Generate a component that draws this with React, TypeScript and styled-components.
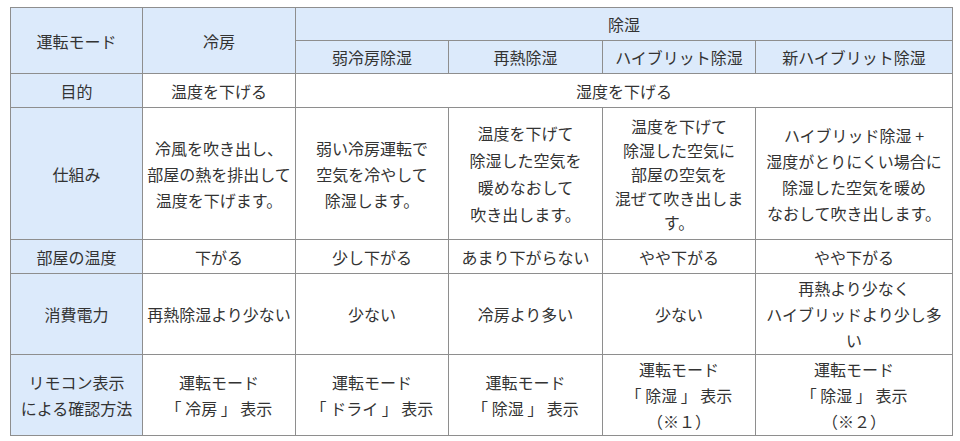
import styled, { createGlobalStyle } from "styled-components";

const GlobalStyle = createGlobalStyle`
  body {
    margin: 0;
    background: #fff;
    font-family: "Noto Sans CJK JP", "Noto Sans", sans-serif;
    color: #333;
  }
`;

const Page = styled.div`
  padding: 7px 0 0 10px;
`;

const Table = styled.table`
  width: 942px;
  table-layout: fixed;
  border-collapse: collapse;
  font-size: 16px;
  line-height: 26px;
`;

const Row = styled.tr<{ $h: number }>`
  height: ${(p) => p.$h}px;
`;

const HeadCell = styled.th`
  background: #dceafb;
  border: 1px solid #8e8e8e;
  font-weight: normal;
  text-align: center;
  vertical-align: middle;
  padding: 0 3px;
  white-space: nowrap;
`;

const Cell = styled.td<{ $lh?: number }>`
  background: #fff;
  border: 1px solid #8e8e8e;
  text-align: center;
  vertical-align: middle;
  padding: 0 3px;
  white-space: nowrap;
  line-height: ${(p) => (p.$lh ? `${p.$lh}px` : "inherit")};
`;

const widths = [132, 153, 153, 154, 153, 197];

type Line = string[];

function Lines({ lines }: { lines: Line }) {
  return (
    <>
      {lines.map((l, i) => (
        <span key={i}>
          {i > 0 && <br />}
          {l}
        </span>
      ))}
    </>
  );
}

type BodyRow = {
  label: Line;
  h: number;
  cells: Line[];
  lh?: number[];
};

const rows: BodyRow[] = [
  {
    label: ["仕組み"],
    h: 132,
    cells: [
      ["冷風を吹き出し、", "部屋の熱を排出して", "温度を下げます。"],
      ["弱い冷房運転で", "空気を冷やして", "除湿します。"],
      ["温度を下げて", "除湿した空気を", "暖めなおして", "吹き出します。"],
      ["温度を下げて", "除湿した空気に", "部屋の空気を", "混ぜて吹き出しま", "す。"],
      ["ハイブリッド除湿 +", "湿度がとりにくい場合に", "除湿した空気を暖め", "なおして吹き出します。"],
    ],
    lh: [0, 0, 27, 24, 0],
  },
  {
    label: ["部屋の温度"],
    h: 34,
    cells: [["下がる"], ["少し下がる"], ["あまり下がらない"], ["やや下がる"], ["やや下がる"]],
  },
  {
    label: ["消費電力"],
    h: 81,
    cells: [
      ["再熱除湿より少ない"],
      ["少ない"],
      ["冷房より多い"],
      ["少ない"],
      ["再熱より少なく", "ハイブリッドより少し多", "い"],
    ],
  },
  {
    label: ["リモコン表示", "による確認方法"],
    h: 81,
    cells: [
      ["運転モード", "「 冷房 」 表示"],
      ["運転モード", "「 ドライ 」 表示"],
      ["運転モード", "「 除湿 」 表示"],
      ["運転モード", "「 除湿 」 表示", "（※１）"],
      ["運転モード", "「 除湿 」 表示", "（※２）"],
    ],
  },
];

const subModes = ["弱冷房除湿", "再熱除湿", "ハイブリット除湿", "新ハイブリット除湿"];

export default function App() {
  return (
    <>
      <GlobalStyle />
      <Page>
        <Table>
          <colgroup>
            {widths.map((w, i) => (
              <col key={i} style={{ width: w }} />
            ))}
          </colgroup>
          <tbody>
            <Row $h={33}>
              <HeadCell rowSpan={2}>運転モード</HeadCell>
              <HeadCell rowSpan={2}>冷房</HeadCell>
              <HeadCell colSpan={4}>除湿</HeadCell>
            </Row>
            <Row $h={33}>
              {subModes.map((m) => (
                <HeadCell key={m}>{m}</HeadCell>
              ))}
            </Row>
            <Row $h={34}>
              <HeadCell>目的</HeadCell>
              <Cell>温度を下げる</Cell>
              <Cell colSpan={4}>湿度を下げる</Cell>
            </Row>
            {rows.map((r, ri) => (
              <Row key={ri} $h={r.h}>
                <HeadCell>
                  <Lines lines={r.label} />
                </HeadCell>
                {r.cells.map((c, ci) => (
                  <Cell key={ci} $lh={r.lh ? r.lh[ci] : undefined}>
                    <Lines lines={c} />
                  </Cell>
                ))}
              </Row>
            ))}
          </tbody>
        </Table>
      </Page>
    </>
  );
}
